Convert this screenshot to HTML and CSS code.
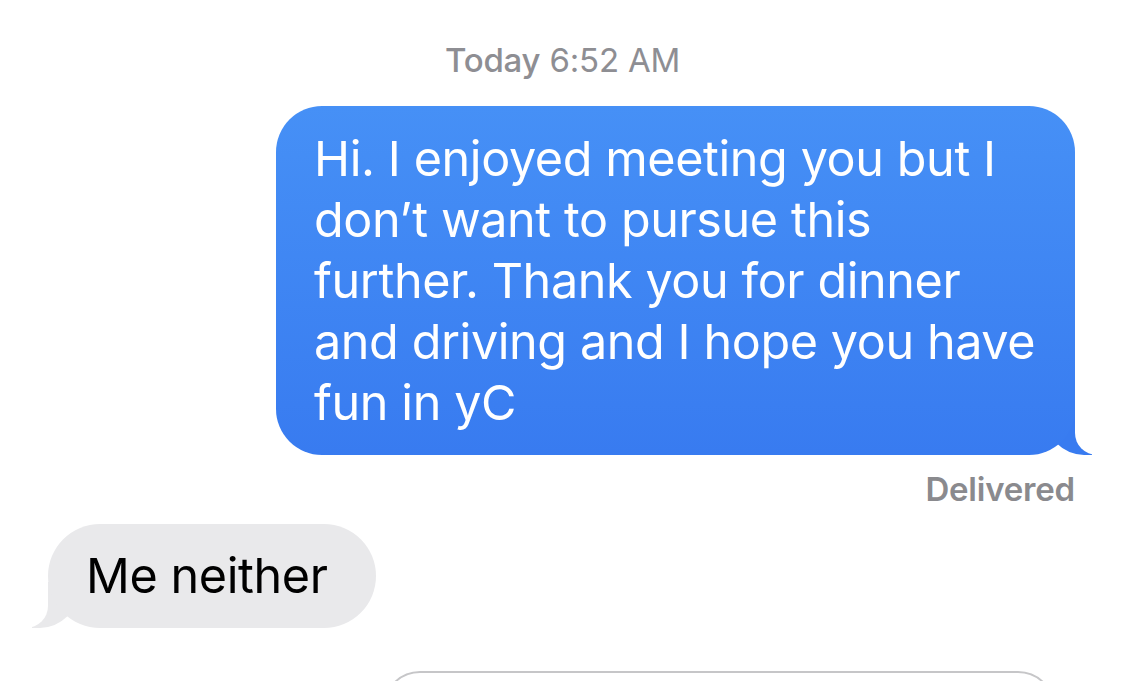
FILE: index.html
```html
<!DOCTYPE html>
<html lang="en">
<head>
    <meta charset="UTF-8">
    <meta name="viewport" content="width=device-width, initial-scale=1.0">
    <title>Messages</title>
    <link rel="stylesheet" href="styles.css">
</head>
<body>
    <main class="thread">
        <p class="timestamp"><strong>Today</strong> 6:52 AM</p>

        <div class="row sent">
            <div class="bubble blue">Hi. I enjoyed meeting you but I don’t want to pursue this further. Thank you for dinner and driving and I hope you have fun in yC</div>
        </div>
        <p class="status">Delivered</p>

        <div class="row received">
            <div class="bubble gray">Me neither</div>
        </div>
    </main>

    <div class="composer">
        <div class="input-box"></div>
    </div>
</body>
</html>
```

FILE: styles.css
```css
body {
    font-family: Inter, "Noto Sans", sans-serif;
    margin: 0;
    padding: 0;
    background-color: #ffffff;
    color: #000000;
    overflow: hidden;
    height: 681px;
}

.thread {
    display: flex;
    flex-direction: column;
    padding: 0 50px 0 48px;
}

.timestamp {
    margin: 40px 0 0;
    text-align: center;
    font-size: 33px;
    line-height: 40px;
    letter-spacing: -0.2px;
    color: #8e8e93;
    padding-left: 2px;
}

.timestamp strong {
    font-weight: 500;
}

.row {
    display: flex;
}

.row.sent {
    justify-content: flex-end;
    margin-top: 26px;
}

.row.received {
    justify-content: flex-start;
    margin-top: 15px;
}

.bubble {
    position: relative;
    font-size: 48.5px;
    line-height: 61px;
    letter-spacing: -0.4px;
    border-radius: 46px;
}

.bubble.blue {
    width: 729px;
    padding: 22px 32px 22px 38px;
    color: #ffffff;
    background: linear-gradient(#4690f6, #387bf0);
}

.bubble.gray {
    padding: 21px 49px 22px 38px;
    background-color: #e9e9eb;
    border-radius: 52px;
}

/* tails sit behind the bubble */
.bubble::before,
.bubble::after {
    content: "";
    position: absolute;
    z-index: -1;
    bottom: 0;
    height: 46px;
}

.bubble.blue::before {
    right: -17px;
    width: 46px;
    background-color: #387bf0;
    border-bottom-left-radius: 38px;
}

.bubble.blue::after {
    right: -26px;
    width: 26px;
    background-color: #ffffff;
    border-bottom-left-radius: 22px;
}

.bubble.gray::before {
    left: -16px;
    width: 46px;
    background-color: #e9e9eb;
    border-bottom-right-radius: 38px;
}

.bubble.gray::after {
    left: -26px;
    width: 26px;
    background-color: #ffffff;
    border-bottom-right-radius: 22px;
}

.status {
    margin: 14px 0 0;
    text-align: right;
    font-size: 33px;
    line-height: 40px;
    font-weight: 600;
    letter-spacing: -0.2px;
    color: #8a8a8e;
}

.composer {
    height: 10px;
    overflow: hidden;
    margin-top: 43px;
    padding: 0 70px 0 383px;
    display: flex;
}

.input-box {
    flex: 1;
    height: 70px;
    border: 2px solid #c6c6c8;
    border-radius: 38px;
}
```
